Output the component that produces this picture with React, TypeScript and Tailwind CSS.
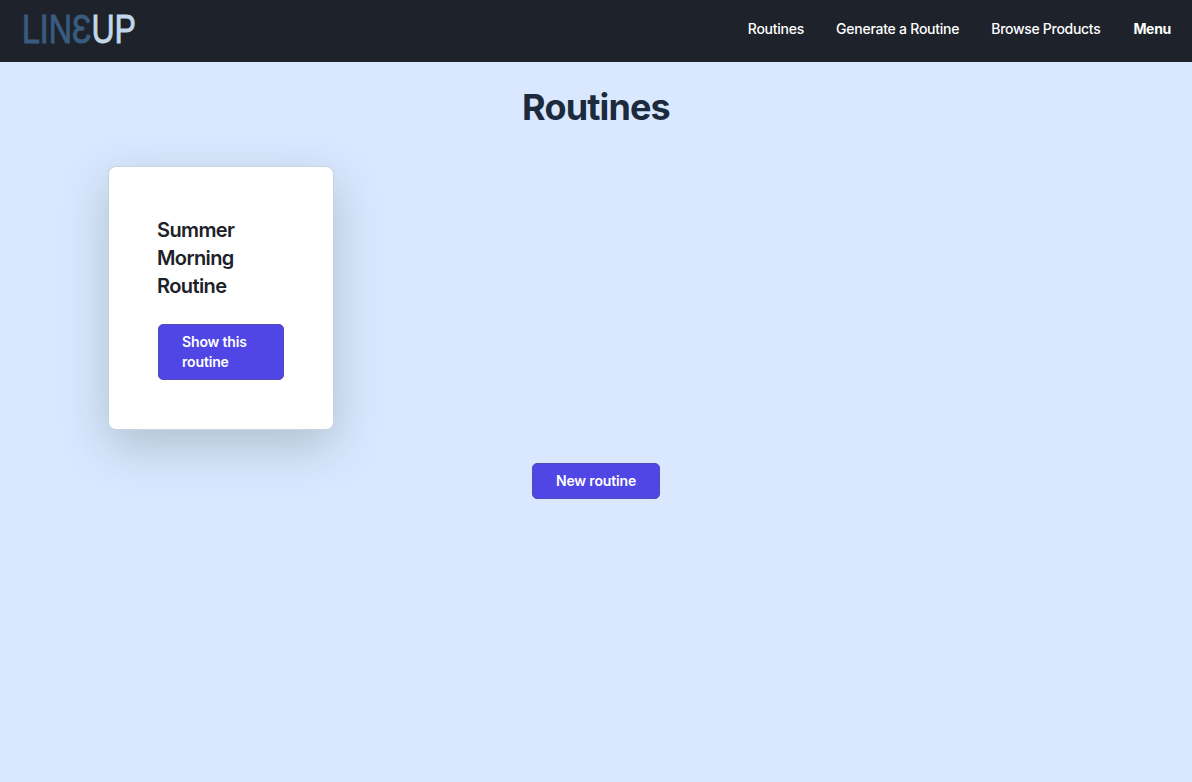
function Logo() {
  return (
    <svg className="block h-[62px] w-[200px]" viewBox="0 0 200 62" role="img" aria-label="LINEUP">
      <defs>
        <linearGradient id="logo-tone" gradientUnits="userSpaceOnUse" x1="0" y1="0" x2="150" y2="0">
          <stop offset="0.615" stopColor="#385b80" />
          <stop offset="0.615" stopColor="#c3d7ea" />
        </linearGradient>
      </defs>
      <text
        x="22"
        y="43"
        textLength="114"
        lengthAdjust="spacingAndGlyphs"
        fontSize="40"
        fontFamily="'Liberation Sans', sans-serif"
        fill="url(#logo-tone)"
        stroke="url(#logo-tone)"
        strokeWidth="0.9"
      >
        LINƐUP
      </text>
    </svg>
  );
}

export default function App() {
  return (
    <div className="min-h-screen bg-[#d9e8ff] font-['Inter',sans-serif] text-[#1d2129]">
      <header className="flex h-[62px] items-start justify-between bg-[#1e222a]">
        <Logo />
        <nav className="flex pt-[19px] pr-[21px] text-sm leading-5 font-medium text-white">
          <a className="mr-[32px] tracking-[-0.25px]">Routines</a>
          <a className="mr-[32px] tracking-[-0.24px]">Generate a Routine</a>
          <a className="mr-[33px] tracking-[-0.3px]">Browse Products</a>
          <a className="font-bold tracking-[-0.3px]">Menu</a>
        </nav>
      </header>
      <main className="flex flex-col items-center">
        <h1 className="mt-[25px] text-4xl leading-10 font-bold tracking-[-0.85px] text-[#1b2a3d]">Routines</h1>
        <section className="mt-[39px] w-[976px]">
          <article className="h-[264px] w-[226px] rounded-lg border border-[#c8d3e2] bg-white p-12 shadow-[0_16px_48px_rgba(70,90,80,0.28)]">
            <h2 className="pt-px text-xl leading-7 font-semibold tracking-[-0.6px]">Summer Morning Routine</h2>
            <button className="mt-6 ml-px h-14 w-[126px] rounded-[5px] border border-[#514bb5] bg-[#4f46e5] px-[23px] text-left text-sm leading-5 font-semibold tracking-[-0.15px] text-white">
              Show this routine
            </button>
          </article>
        </section>
        <button className="mt-[33px] h-9 w-32 rounded-[5px] border border-[#514bb5] bg-[#4f46e5] text-sm font-semibold tracking-[-0.15px] text-white">
          New routine
        </button>
      </main>
    </div>
  );
}
